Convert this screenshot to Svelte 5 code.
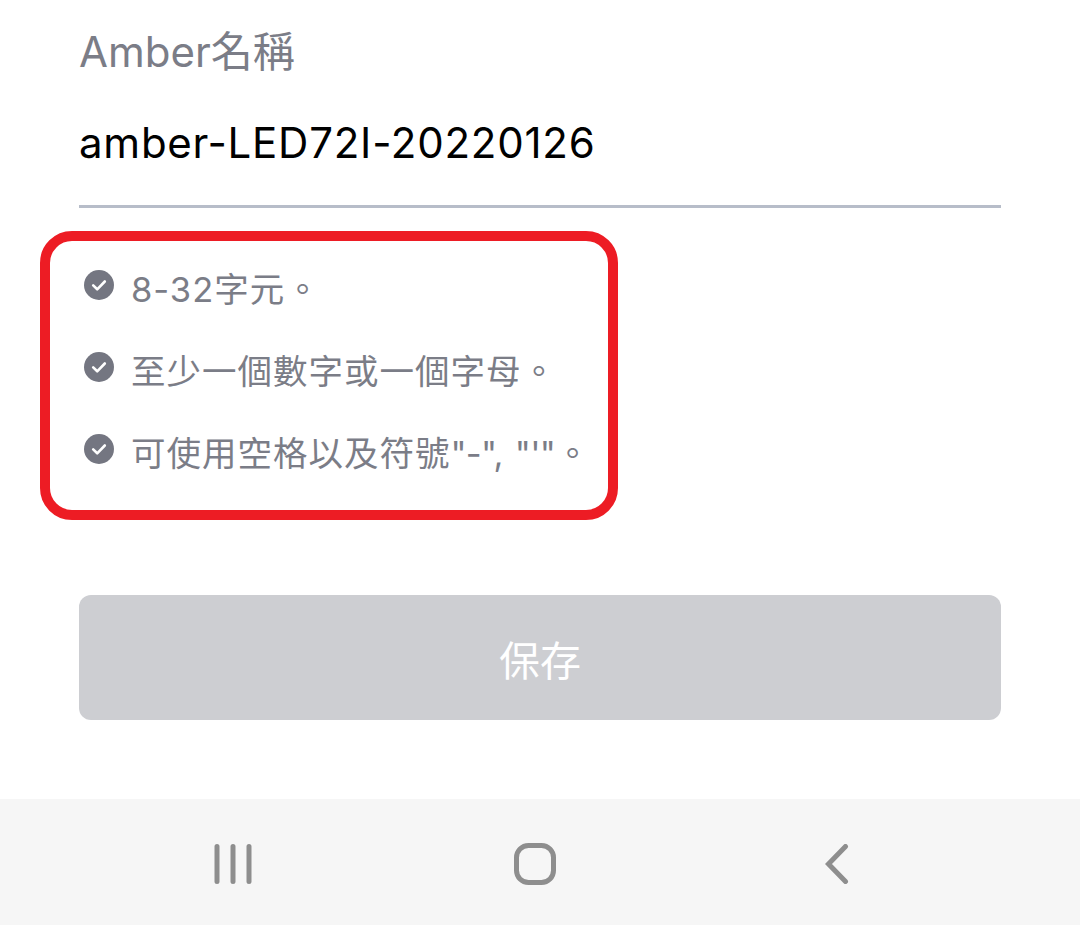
<script>
  const rules = [
    { text: '8-32字元。' },
    { text: '至少一個數字或一個字母。' },
    { text: '可使用空格以及符號', symbols: `"-", "'"`, end: '。' }
  ];
</script>

<div class="page">
  <main class="content">
    <div class="label">Amber名稱</div>
    <div class="value">amber-LED72I-20220126</div>
    <div class="rule-line"></div>
    <ul class="rules">
      {#each rules as rule}
        <li>
          <svg class="check" viewBox="0 0 30 30" width="30" height="30" aria-hidden="true">
            <circle cx="15" cy="15" r="15" fill="#747681" />
            <path d="M9.2 15.4l4 3.9 7.6-7.8" fill="none" stroke="#fff" stroke-width="2.6" stroke-linecap="round" stroke-linejoin="round" />
          </svg>
          <span>{rule.text}{#if rule.symbols}<span class="symbols">{rule.symbols}</span>{rule.end}{/if}</span>
        </li>
      {/each}
    </ul>
    <button class="save" type="button">保存</button>
  </main>
  <nav class="nav">
    <svg viewBox="0 0 38 40" width="38" height="40" aria-hidden="true">
      <path d="M3 2.5v35M19 2.5v35M35 2.5v35" stroke="#8e8e8e" stroke-width="5" stroke-linecap="round" fill="none" />
    </svg>
    <svg viewBox="0 0 42 42" width="42" height="42" aria-hidden="true">
      <rect x="2.5" y="2.5" width="37" height="37" rx="12" stroke="#8e8e8e" stroke-width="5" fill="none" />
    </svg>
    <svg viewBox="0 0 24 40" width="24" height="40" aria-hidden="true">
      <path d="M20.5 2.5L3.5 20l17 17.5" stroke="#8e8e8e" stroke-width="5" stroke-linecap="round" stroke-linejoin="miter" fill="none" />
    </svg>
  </nav>
</div>

<style>
  :global(body) {
    margin: 0;
    background: #fff;
  }
  .page {
    width: 1080px;
    height: 925px;
    display: flex;
    flex-direction: column;
    overflow: hidden;
    font-family: Inter, "Noto Sans CJK TC", sans-serif;
  }
  .content {
    flex: 1;
    padding: 27px 79px 0;
    box-sizing: border-box;
  }
  .label {
    font-size: 42px;
    line-height: 50px;
    color: #7b7d87;
  }
  .value {
    margin-top: 41px;
    font-size: 42px;
    line-height: 50px;
    letter-spacing: 0.76px;
    color: #000;
  }
  .rule-line {
    margin-top: 37px;
    height: 3px;
    background: #b7bdc9;
  }
  .rules {
    list-style: none;
    box-sizing: border-box;
    margin: 23px 0 0 -39px;
    padding: 24px 0 0 34px;
    width: 578px;
    height: 289px;
    border: 10px solid #ed1c24;
    border-radius: 32px;
    display: flex;
    flex-direction: column;
    gap: 32px;
  }
  .rules li {
    display: flex;
    align-items: flex-start;
    gap: 17px;
    font-size: 34.5px;
    letter-spacing: 1px;
    line-height: 50px;
    color: #7b7d87;
    white-space: nowrap;
  }
  .symbols {
    letter-spacing: -0.7px;
    word-spacing: 3px;
  }
  .check {
    margin-top: 5px;
    flex: none;
  }
  .save {
    display: block;
    width: 100%;
    height: 125px;
    margin-top: 75px;
    border: 0;
    border-radius: 12px;
    background: #cdced2;
    color: #fff;
    font: inherit;
    font-size: 41px;
  }
  .nav {
    height: 126px;
    box-sizing: border-box;
    padding: 4px 0 0 82px;
    background: #f6f6f6;
    display: grid;
    grid-template-columns: repeat(3, 302px);
    align-items: center;
    justify-items: center;
  }
</style>
